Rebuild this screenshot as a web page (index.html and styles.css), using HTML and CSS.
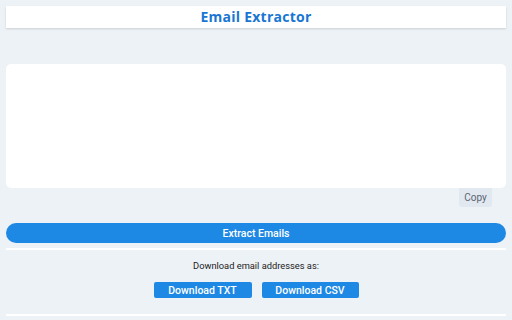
FILE: index.html
```html
<!DOCTYPE html>
<html>
<head>
<meta charset="utf-8">
<link rel="stylesheet" href="styles.css">
</head>
<body>
<div class="page">
  <header class="header"><h1 class="title">Email Extractor</h1></header>
  <div class="editor">
    <textarea class="input"></textarea>
    <div class="copy-row"><button class="copy">Copy</button></div>
  </div>
  <button class="extract">Extract Emails</button>
  <section class="download">
    <p class="label">Download email addresses as:</p>
    <div class="buttons">
      <button class="dl dl-txt">Download TXT</button>
      <button class="dl dl-csv">Download CSV</button>
    </div>
  </section>
</div>
</body>
</html>
```
FILE: styles.css
```css
html, body {
  margin: 0;
  padding: 0;
  background: #edf2f7;
  font-family: Roboto, "Liberation Sans", Arial, sans-serif;
}
.page {
  padding: 6px;
  display: flex;
  flex-direction: column;
}
.header {
  height: 22px;
  background: #fff;
  box-shadow: 0 1px 2px rgba(0, 0, 0, 0.15);
  display: flex;
  align-items: center;
  justify-content: center;
}
.title {
  margin: 0;
  font-family: "Open Sans", sans-serif;
  font-weight: 700;
  font-size: 14px;
  letter-spacing: 0.25px;
  color: #1976d2;
  line-height: 22px;
}
.editor {
  margin-top: 36px;
  display: flex;
  flex-direction: column;
}
.input {
  display: block;
  height: 124px;
  border: none;
  border-radius: 5px;
  background: #fff;
  resize: none;
  padding: 0;
  margin: 0;
  outline: none;
}
.copy-row {
  display: flex;
  justify-content: flex-end;
  padding-right: 14px;
}
.copy {
  width: 33px;
  height: 19px;
  border: none;
  border-radius: 0 0 3px 3px;
  background: #e2e8f0;
  color: #5a6473;
  font-family: Roboto, "Liberation Sans", Arial, sans-serif;
  font-size: 10px;
  padding: 0;
}
.extract {
  margin-top: 16px;
  height: 20px;
  border: none;
  border-radius: 10px;
  background: #1e88e5;
  color: #fff;
  font-family: Roboto, "Liberation Sans", Arial, sans-serif;
  font-weight: 500;
  font-size: 10.5px;
  padding: 0;
}
.download {
  margin-top: 5px;
  border-top: 2px solid #fff;
  border-bottom: 2px solid #fff;
  padding: 9px 0 16px;
  text-align: center;
}
.label {
  margin: 0;
  font-size: 9.3px;
  line-height: 14px;
  color: #222;
}
.buttons {
  margin-top: 9px;
  display: flex;
  justify-content: center;
  gap: 10px;
}
.dl {
  width: 98px;
  height: 16px;
  border: none;
  border-radius: 2px;
  background: #1e88e5;
  color: #fff;
  font-family: Roboto, "Liberation Sans", Arial, sans-serif;
  font-weight: 500;
  font-size: 10.5px;
  padding: 0;
}
.dl-csv {
  width: 97px;
}
```
